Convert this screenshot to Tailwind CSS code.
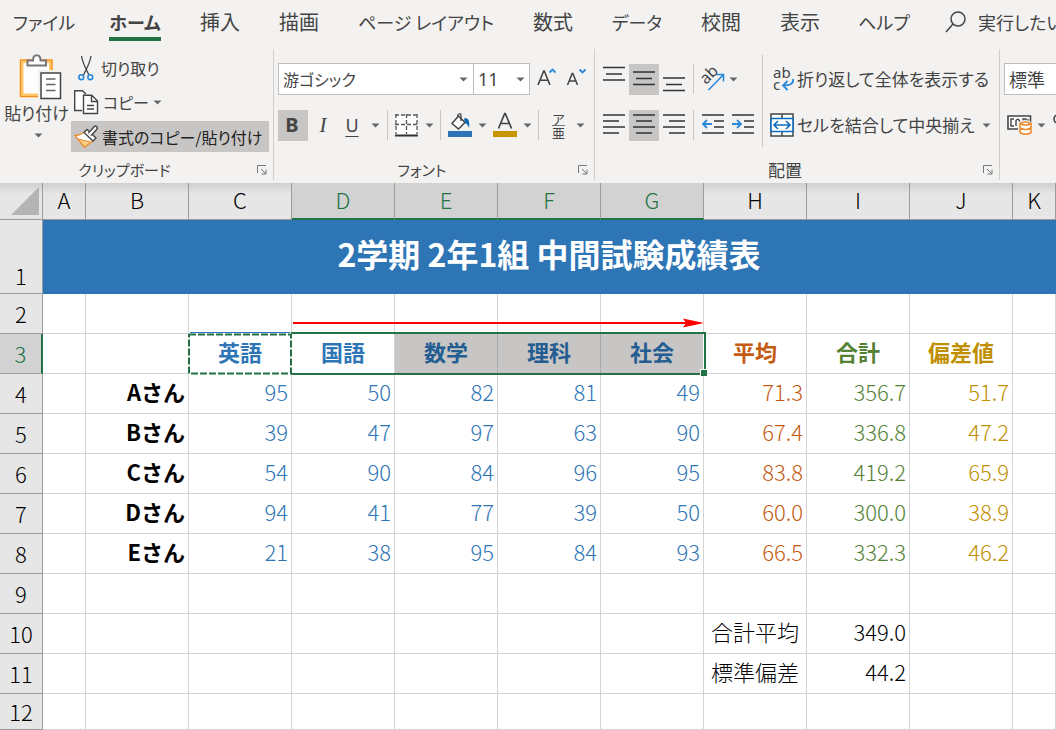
<!DOCTYPE html>
<html lang="ja">
<head>
<meta charset="utf-8">
<meta name="viewport" content="width=device-width, initial-scale=1">
<title>中間試験成績表</title>
<script src="https://cdn.jsdelivr.net/npm/@tailwindcss/browser@4"></script>
</head>
<body class="flex h-screen flex-col overflow-hidden bg-white font-['Noto_Sans_CJK_JP',sans-serif] text-[#444444]">
<svg class="hidden">
  <symbol id="caret" viewBox="0 0 9 5"><path d="M0.5 0.5h8L4.5 4.5z" fill="#666"/></symbol>
  <symbol id="launcher" viewBox="0 0 10 10"><path d="M0.5 8V0.5H9M4 4l4.5 4.5M9 4.500V9H4.500" fill="none" stroke="#777"/></symbol>
</svg>

<header class="shrink-0 overflow-hidden bg-[#f3f2f1] text-[18px] leading-6 whitespace-nowrap [font-feature-settings:'palt']">
  <nav class="flex h-[45px] items-start pt-[10px] [&>a]:shrink-0 [&>a]:text-center">
    <a href="#" class="w-[88px]">ファイル</a>
    <a href="#" class="flex w-[94px] justify-center font-bold"><span class="border-b-4 border-[#217346] pb-[3px]">ホーム</span></a>
    <a href="#" class="w-[76px] text-[20px]">挿入</a>
    <a href="#" class="w-[82px] text-[20px]">描画</a>
    <a href="#" class="w-[172px]">ページ レイアウト</a>
    <a href="#" class="w-[82px] text-[20px]">数式</a>
    <a href="#" class="w-[86px]">データ</a>
    <a href="#" class="w-[82px] text-[20px]">校閲</a>
    <a href="#" class="w-[76px] text-[20px]">表示</a>
    <a href="#" class="w-[92px]">ヘルプ</a>
    <button class="flex shrink-0 items-center gap-3 pl-[15px]">
      <svg class="h-[22px] w-[21px]" viewBox="0 0 21 22" fill="none" stroke="#444" stroke-width="1.500"><circle cx="13" cy="8" r="7"/><path d="M8 13L1 21"/></svg>
      <span>実行したい作業</span>
    </button>
  </nav>

  <div class="flex h-[138px] pt-1 pb-[3px] [&>section]:shrink-0 [&>section]:border-r [&>section]:border-[#d0cecc]">
    <section class="flex w-[274px] flex-col justify-between">
      <div class="flex">
        <button class="flex w-[71px] flex-col items-center pt-[2px] pl-[2px]">
          <svg class="ml-2 h-[50px] w-[46px]" viewBox="18 51 46 50" fill="none">
            <path d="M21.500 61H51v34.500H21.500z" fill="#fdfdfd" stroke="#ffc466" stroke-width="4"/>
            <path d="M20.500 60H52v36.500H20.500z" stroke="#f08b24"/>
            <path d="M27.500 65.500v-5h5.500c0-7 7.500-7 7.500 0h5.500v5z" fill="#fff" stroke="#777" stroke-width="2"/>
            <path d="M38 70h25v30H38z" fill="#f3f2f1"/>
            <path d="M41 73h19.500v25.500H41z" fill="#fff" stroke="#444" stroke-width="1.500"/>
            <path d="M46 79h9.500M46 84.500h9.500M46 90.500h9.500" stroke="#666" stroke-width="1.500"/>
          </svg>
          <span class="text-[17px]">貼り付け</span>
          <svg class="mt-2 ml-1 h-[5px] w-[9px]"><use href="#caret"/></svg>
        </button>
        <div class="flex flex-col gap-1 pt-1 text-[16px] [&>button]:flex [&>button]:items-center">
          <button class="h-[30px] gap-[6px] pl-[6px]">
            <svg class="h-[26px] w-[18px]" viewBox="77 54 18 26" fill="none"><path d="M81.500 55c1 7 4 12 7.500 19M91 55c-1 7-4 12-7.500 19" stroke="#444" stroke-width="1.300"/><g stroke="#2b88d8" stroke-width="1.600"><circle cx="81.300" cy="76.200" r="2.400"/><circle cx="90.300" cy="76.200" r="2.400"/></g></svg>
            <span>切り取り</span>
          </button>
          <button class="h-[30px] gap-1 pl-[3px]">
            <svg class="h-[25px] w-[25px]" viewBox="74 90 25 25" fill="none" stroke="#444" stroke-width="1.400"><path d="M82 110.500h-7.300V90.700h7.800l3.500 3.500" fill="#fff"/><path d="M83.500 95.200h8.200l5.800 5.800v12.500h-14z" fill="#fff"/><path d="M91.500 95.500v6h6M87 105.500h7M87 109h7"/></svg>
            <span>コピー</span>
            <svg class="h-[5px] w-[9px]"><use href="#caret"/></svg>
          </button>
          <button class="h-[31px] w-[198px] gap-1 bg-[#c8c6c4] pl-[3px] text-[#222]">
            <svg class="h-[24px] w-[24px] shrink-0" viewBox="74 124 24 24" fill="none"><path d="M75 134.500c4 0 7-1.500 10-4l9 9c-3 1.500-6 4-9.500 7z" fill="#fff" stroke="#ef8a2c" stroke-width="1.300"/><path d="M78 138l13 3-6.500 5z" fill="#f9d08a" stroke="#ef8a2c"/><path d="M84 131.500l3-3 9 8.500-3 3z" fill="#fff" stroke="#444" stroke-width="1.300"/><path d="M91 132l4.500-5" stroke="#444" stroke-width="5" stroke-linecap="round"/><path d="M90 133l5.500-6" stroke="#fff" stroke-width="2.200" stroke-linecap="round"/></svg>
            <span>書式のコピー/貼り付け</span>
          </button>
        </div>
      </div>
      <div class="flex h-5 items-center justify-end pr-[6px] text-[15px]"><span class="flex-1 pr-2 text-center">クリップボード</span><button aria-label="クリップボードの設定"><svg class="h-[10px] w-[10px]"><use href="#launcher"/></svg></button></div>
    </section>

    <section class="flex w-[321px] flex-col justify-between pl-1">
      <div class="flex flex-col gap-[14px] pt-[14px]">
        <div class="flex h-8 items-center">
          <label class="relative flex h-8 w-[196px] items-center border border-[#c0bebc] bg-white"><select aria-label="フォント" class="w-full appearance-none pl-1 text-[16px]"><option>游ゴシック</option></select><svg class="pointer-events-none absolute right-[5px] h-[5px] w-[9px]"><use href="#caret"/></svg></label>
          <label class="relative flex h-8 w-[56px] items-center border border-l-0 border-[#c0bebc] bg-white"><select aria-label="フォント サイズ" class="w-full appearance-none pl-1 font-['Noto_Sans'] text-[18px]"><option>11</option></select><svg class="pointer-events-none absolute right-1 h-[5px] w-[9px]"><use href="#caret"/></svg></label>
          <button class="ml-[6px]" aria-label="フォント サイズの拡大"><svg class="h-[22px] w-[22px]" viewBox="0 0 22 22" fill="none"><path d="M2 17L7.700 3h0.600L14 17M4 12.300h8" stroke="#444" stroke-width="1.600"/><path d="M13.500 4.500l3-3 3 3" stroke="#2b88d8" stroke-width="1.800"/></svg></button>
          <button class="ml-2" aria-label="フォント サイズの縮小"><svg class="h-[22px] w-[22px]" viewBox="0 0 22 22" fill="none"><path d="M1.500 17L6.200 5.500h0.600L11.500 17M3 13h7" stroke="#444" stroke-width="1.500"/><path d="M13.500 1.500l3 3 3-3" stroke="#2b88d8" stroke-width="1.800"/></svg></button>
        </div>
        <div class="flex h-8 items-center">
          <button class="h-[31px] w-[30px] bg-[#c8c6c4] pr-[2px] font-['Noto_Sans'] text-[20px] font-bold">B</button>
          <button class="w-[30px] font-['Liberation_Serif'] text-[21px] italic">I</button>
          <button class="w-[28px] font-['Noto_Sans'] text-[18px] underline underline-offset-4">U</button>
          <svg class="ml-[5px] h-[5px] w-[9px]"><use href="#caret"/></svg>
          <span class="ml-[7px] h-[30px] w-px bg-[#c8c6c4]"></span>
          <button class="ml-[7px] flex items-center gap-[6px]" aria-label="罫線"><svg class="h-[24px] w-[24px]" viewBox="0 0 24 24" fill="none"><path d="M0.500 1.500h22v20H0.500z" fill="#fff"/><path d="M0 2h23M0 11.500h23M1 1v20M11.500 1v20M22 1v20" stroke="#555" stroke-width="1.300" stroke-dasharray="4 2"/><path d="M0 22.500h23" stroke="#333" stroke-width="2"/></svg><svg class="h-[5px] w-[9px]"><use href="#caret"/></svg></button>
          <span class="ml-[6px] h-[30px] w-px bg-[#c8c6c4]"></span>
          <button class="ml-[7px] flex items-center gap-[6px]" aria-label="塗りつぶしの色"><svg class="h-[26px] w-[24px]" viewBox="0 0 24 26" fill="none"><path d="M0 19h24v6H0z" fill="#2e75b6"/><path d="M10.500 4l6.500 6.500-6.500 6.500-6.500-5.500z" fill="#fff" stroke="#444" stroke-width="1.500"/><path d="M13 9V3.500c0-3-3-2-3.500 1" stroke="#444" stroke-width="1.300"/><path d="M16 6.500c5-1.500 6 4 5 9.500-1-3-2-4-4-5z" fill="#1068b4"/></svg><svg class="h-[5px] w-[9px]"><use href="#caret"/></svg></button>
          <button class="ml-[6px] flex items-center gap-[6px]" aria-label="フォントの色"><svg class="h-[26px] w-[24px]" viewBox="0 0 24 26" fill="none"><path d="M0 19h24v6H0z" fill="#c69500"/><path d="M5.500 16.500L11.700 1.500h0.600L18.500 16.500M8 11.500h8" stroke="#444" stroke-width="1.700"/></svg><svg class="h-[5px] w-[9px]"><use href="#caret"/></svg></button>
          <span class="ml-[6px] h-[30px] w-px bg-[#c8c6c4]"></span>
          <button class="ml-[13px] flex items-center gap-[11px]" aria-label="ふりがなの表示"><span class="flex flex-col text-center text-[13px] leading-[13px]"><span class="border-b border-[#777]">ア</span><span>亜</span></span><svg class="h-[5px] w-[9px]"><use href="#caret"/></svg></button>
        </div>
      </div>
      <div class="flex h-5 items-center justify-end pr-[6px] text-[15px]"><span class="flex-1 pr-3 text-center">フォント</span><button aria-label="フォントの設定"><svg class="h-[10px] w-[10px]"><use href="#launcher"/></svg></button></div>
    </section>

    <section class="flex w-[405px] flex-col justify-between pl-1">
      <div class="flex">
        <div class="flex flex-col gap-[14px] pt-[14px]">
          <div class="flex h-8 items-center [&>button]:flex [&>button]:h-[31px] [&>button]:w-[30px] [&>button]:items-center [&>button]:justify-center">
            <button aria-label="上揃え"><svg class="h-[31px] w-[22px]" viewBox="0 0 22 31" stroke="#333" stroke-width="1.600"><path d="M0 3.500h22M3 10h16M0 16h22"/></svg></button>
            <button aria-label="上下中央揃え" class="bg-[#c8c6c4]"><svg class="h-[31px] w-[22px]" viewBox="0 0 22 31" stroke="#333" stroke-width="1.600"><path d="M0 8h22M3 14.500h16M0 20.500h22"/></svg></button>
            <button aria-label="下揃え"><svg class="h-[31px] w-[22px]" viewBox="0 0 22 31" stroke="#333" stroke-width="1.600"><path d="M0 14h22M3 20.500h16M0 26.500h22"/></svg></button>
            <span class="mr-1 ml-1 h-[30px] w-px bg-[#c8c6c4]"></span>
            <svg class="h-[30px] w-[28px] overflow-visible" viewBox="699 63 28 30" fill="none" role="img" aria-label="方向"><text x="0" y="0" transform="translate(707 84) rotate(-45)" font-family="Noto Sans" font-size="16" fill="#444">ab</text><path d="M709.500 89L724 74M717.500 73.500h7v7" stroke="#2b88d8" stroke-width="1.600"/></svg>
            <svg class="ml-[3px] h-[5px] w-[9px]"><use href="#caret"/></svg>
          </div>
          <div class="flex h-8 items-center [&>button]:flex [&>button]:h-[31px] [&>button]:w-[30px] [&>button]:items-center [&>button]:justify-center">
            <button aria-label="左揃え"><svg class="h-[31px] w-[22px]" viewBox="0 0 22 31" stroke="#333" stroke-width="1.600"><path d="M0 5h22M0 11h16M0 17h22M0 23h16"/></svg></button>
            <button aria-label="中央揃え" class="bg-[#c8c6c4]"><svg class="h-[31px] w-[22px]" viewBox="0 0 22 31" stroke="#333" stroke-width="1.600"><path d="M0 5h22M3 11h16M0 17h22M3 23h16"/></svg></button>
            <button aria-label="右揃え"><svg class="h-[31px] w-[22px]" viewBox="0 0 22 31" stroke="#333" stroke-width="1.600"><path d="M0 5h22M6 11h16M0 17h22M6 23h16"/></svg></button>
            <span class="mr-1 ml-1 h-[30px] w-px bg-[#c8c6c4]"></span>
            <button aria-label="インデントを減らす"><svg class="h-[31px] w-[22px]" viewBox="0 0 22 31" fill="none" stroke="#333" stroke-width="1.600"><path d="M0 5h22M12 11h10M12 17h10M0 23h22"/><path d="M10 14H1M5 10l-4 4 4 4" stroke="#2b88d8" stroke-width="1.800"/></svg></button>
            <button aria-label="インデントを増やす"><svg class="h-[31px] w-[22px]" viewBox="0 0 22 31" fill="none" stroke="#333" stroke-width="1.600"><path d="M0 5h22M12 11h10M12 17h10M0 23h22"/><path d="M0 14h9M5 10l4 4-4 4" stroke="#2b88d8" stroke-width="1.800"/></svg></button>
          </div>
        </div>
        <span class="mt-[6px] ml-1 h-[92px] w-px bg-[#c8c6c4]"></span>
        <div class="flex flex-col gap-[14px] pt-[14px] pl-[7px]">
          <button class="flex h-8 items-center gap-px pl-[2px]">
            <svg class="h-[28px] w-[24px] overflow-visible" viewBox="772 63 24 28" fill="none"><text x="773" y="76" font-family="Noto Sans" font-size="15" fill="#444">ab</text><text x="773" y="88" font-family="Noto Sans" font-size="15" fill="#444">c</text><path d="M793 77c1 4-2 6.500-10 6.500M787.500 79l-4.500 4.500 4.500 4.500" stroke="#2b88d8" stroke-width="1.800"/></svg>
            <span class="text-[17px]">折り返して全体を表示する</span>
          </button>
          <button class="flex h-8 items-center gap-[3px]">
            <svg class="h-[24px] w-[24px]" viewBox="0 0 24 24" fill="none"><path d="M1 1h22v22H1zM12 1v22" fill="#fff" stroke="#444" stroke-width="1.500"/><path d="M1 5.500h22v13H1z" fill="#fff" stroke="#0f6cbd" stroke-width="1.600"/><path d="M4 12h16M8 8l-4 4 4 4M16 8l4 4-4 4" stroke="#0f6cbd" stroke-width="1.600"/></svg>
            <span class="text-[17px]">セルを結合して中央揃え</span>
            <svg class="ml-1 h-[5px] w-[9px]"><use href="#caret"/></svg>
          </button>
        </div>
      </div>
      <div class="flex h-5 items-center justify-end pr-[6px] text-[17px]"><span class="flex-1 pr-3 text-center">配置</span><button aria-label="配置の設定"><svg class="h-[10px] w-[10px]"><use href="#launcher"/></svg></button></div>
    </section>

    <section class="flex w-[230px] flex-col gap-[14px] pt-[14px] pl-1">
      <select aria-label="表示形式" class="h-8 w-[180px] appearance-none border border-[#c0bebc] bg-white pl-1 text-[18px]"><option>標準</option></select>
      <div class="flex h-8 items-center pl-[3px]">
        <button class="flex items-center gap-[5px]" aria-label="通貨表示形式"><svg class="h-[22px] w-[25px]" viewBox="0 0 25 22" fill="none"><path d="M1 2h22.500v13H1z" fill="#fff" stroke="#444" stroke-width="1.600"/><path d="M7 5H4v7h3M9 12V6.500Q11 4 12.500 6.500V9M16 8V5h3v3M21 5v3" stroke="#444" stroke-width="1.400"/><path d="M12 9q6-4 12 0v10q-6 4-12 0z" fill="#fff" stroke="#f3f2f1" stroke-width="2"/><path d="M13 9.500q5.500-3 11 0v9q-5.500 3.500-11 0zM13 9.500q5.500 3 11 0M13 14q5.500 3 11 0" stroke="#ef8a2c" stroke-width="1.500"/></svg><svg class="h-[5px] w-[9px]"><use href="#caret"/></svg></button>
        <button class="ml-[7px]" aria-label="パーセント スタイル"><svg class="h-[22px] w-[20px]" viewBox="0 0 20 22" fill="none" stroke="#444" stroke-width="1.600"><circle cx="5" cy="5" r="4"/><circle cx="15" cy="16" r="4"/><path d="M16 1L4 21"/></svg></button>
      </div>
    </section>
  </div>
</header>

<main class="min-h-0 flex-1 overflow-hidden">
<table class="w-full table-fixed border-separate border-spacing-0 text-[22px] leading-7 whitespace-nowrap text-black [&_tbody_th]:border-r [&_tbody_th]:border-b [&_tbody_th]:border-[#9b9b9b] [&_tbody_th]:bg-[#e6e6e6] [&_tbody_th]:p-0 [&_tbody_th]:pb-[2px] [&_tbody_th]:font-light [&_td]:border-r [&_td]:border-b [&_td]:border-[#d4d4d4] [&_td]:p-0 [&_td]:pr-[3px] [&_td]:pb-[5px] [&_td]:text-right [&_thead_th]:border-r [&_thead_th]:border-b [&_thead_th]:border-[#9b9b9b] [&_thead_th]:p-0 [&_thead_th]:pb-1 [&_thead_th]:font-light">
  <colgroup><col class="w-[43px]"><col class="w-[43px]"><col class="w-[103px]"><col class="w-[103px]"><col class="w-[103px]"><col class="w-[103px]"><col class="w-[103px]"><col class="w-[103px]"><col class="w-[103px]"><col class="w-[103px]"><col class="w-[103px]"><col></colgroup>
  <thead>
    <tr class="h-[37px] bg-linear-to-b from-[#cfcfcf] to-[#e6e6e6] to-30%">
      <th aria-label="すべて選択" class="pb-0!"><svg class="ml-[11px] h-[28px] w-[28px]" viewBox="0 0 28 28"><path d="M28 0v28H0z" fill="#b4b4b4"/></svg></th>
      <th>A</th><th>B</th><th>C</th>
      <th class="border-b-2! border-b-[#217346]! bg-[#d2d2d2] text-[#217346]">D</th><th class="border-b-2! border-b-[#217346]! bg-[#d2d2d2] text-[#217346]">E</th><th class="border-b-2! border-b-[#217346]! bg-[#d2d2d2] text-[#217346]">F</th><th class="border-b-2! border-b-[#217346]! bg-[#d2d2d2] text-[#217346]">G</th>
      <th>H</th><th>I</th><th>J</th><th>K</th>
    </tr>
  </thead>
  <tbody>
    <tr class="h-[74px]"><th class="pb-1! align-bottom">1</th><td colspan="11" class="border-[#2e75b6]! bg-[#2e75b6] pr-0! text-white"><div class="pb-[3px] text-center text-[32px] leading-10 font-bold">2学期 2年1組 中間試験成績表</div></td></tr>
    <tr class="h-[40px]"><th>2</th><td></td><td></td><td></td>
      <td class="relative"><svg class="absolute top-[23px] left-0 z-10 h-[12px] w-[412px]" viewBox="0 0 412 12"><path d="M1 6h400" stroke="#f00" stroke-width="2"/><path d="M391 1.500L412 6l-21 4.500 3-4.500z" fill="#f00"/></svg></td>
      <td></td><td></td><td></td><td></td><td></td><td></td><td></td></tr>
    <tr class="h-[40px] font-bold text-[#2e75b6] [&>td]:pr-0! [&>td]:text-center!"><th class="border-r-2! border-r-[#217346]! bg-[#d2d2d2]! text-[#217346]">3</th><td></td><td></td>
      <td class="relative">英語<svg class="absolute -top-[2px] -left-[2px] z-30 h-[44px] w-[106px]" viewBox="0 0 106 44" fill="none"><path d="M1 1.500h103" stroke="#fff" stroke-width="3"/><path d="M3 0.500h100" stroke="#2e75b6"/><path d="M2 2.500h102v39H2z" stroke="#fff" stroke-width="2"/><path d="M2 2.500h102v39H2z" stroke="#217346" stroke-width="2" stroke-dasharray="7 2"/></svg></td>
      <td class="relative">国語<div class="absolute -top-[2px] -left-px z-20 h-[43px] w-[415px] border-2 border-l-0 border-[#217346]"><span class="absolute -right-[3px] -bottom-[3px] size-[7px] border-t border-l border-white bg-[#217346]"></span></div></td>
      <td class="border-[#aaa]! border-b-white! bg-[#c8c6c4] text-[#235d92]">数学</td><td class="border-[#aaa]! border-b-white! bg-[#c8c6c4] text-[#235d92]">理科</td><td class="border-white! bg-[#c8c6c4] text-[#235d92]">社会</td>
      <td class="text-[#c55a11]">平均</td><td class="text-[#548235]">合計</td><td class="text-[#bf8f00]">偏差値</td><td></td></tr>
    <tr class="h-[40px] font-light text-[#2e75b6]"><th class="text-black">4</th><td></td><td class="font-bold text-black">Aさん</td><td>95</td><td>50</td><td>82</td><td>81</td><td>49</td><td class="text-[#c55a11]">71.3</td><td class="text-[#548235]">356.7</td><td class="text-[#bf8f00]">51.7</td><td></td></tr>
    <tr class="h-[40px] font-light text-[#2e75b6]"><th class="text-black">5</th><td></td><td class="font-bold text-black">Bさん</td><td>39</td><td>47</td><td>97</td><td>63</td><td>90</td><td class="text-[#c55a11]">67.4</td><td class="text-[#548235]">336.8</td><td class="text-[#bf8f00]">47.2</td><td></td></tr>
    <tr class="h-[40px] font-light text-[#2e75b6]"><th class="text-black">6</th><td></td><td class="font-bold text-black">Cさん</td><td>54</td><td>90</td><td>84</td><td>96</td><td>95</td><td class="text-[#c55a11]">83.8</td><td class="text-[#548235]">419.2</td><td class="text-[#bf8f00]">65.9</td><td></td></tr>
    <tr class="h-[40px] font-light text-[#2e75b6]"><th class="text-black">7</th><td></td><td class="font-bold text-black">Dさん</td><td>94</td><td>41</td><td>77</td><td>39</td><td>50</td><td class="text-[#c55a11]">60.0</td><td class="text-[#548235]">300.0</td><td class="text-[#bf8f00]">38.9</td><td></td></tr>
    <tr class="h-[40px] font-light text-[#2e75b6]"><th class="text-black">8</th><td></td><td class="font-bold text-black">Eさん</td><td>21</td><td>38</td><td>95</td><td>84</td><td>93</td><td class="text-[#c55a11]">66.5</td><td class="text-[#548235]">332.3</td><td class="text-[#bf8f00]">46.2</td><td></td></tr>
    <tr class="h-[40px]"><th>9</th><td></td><td></td><td></td><td></td><td></td><td></td><td></td><td></td><td></td><td></td><td></td></tr>
    <tr class="h-[40px] font-light"><th>10</th><td></td><td></td><td></td><td></td><td></td><td></td><td></td><td class="pr-[7px]!">合計平均</td><td>349.0</td><td></td><td></td></tr>
    <tr class="h-[40px] font-light"><th>11</th><td></td><td></td><td></td><td></td><td></td><td></td><td></td><td class="pr-[7px]!">標準偏差</td><td>44.2</td><td></td><td></td></tr>
    <tr class="h-[36px]"><th>12</th><td></td><td></td><td></td><td></td><td></td><td></td><td></td><td></td><td></td><td></td><td></td></tr>
  </tbody>
</table>
</main>
</body>
</html>
